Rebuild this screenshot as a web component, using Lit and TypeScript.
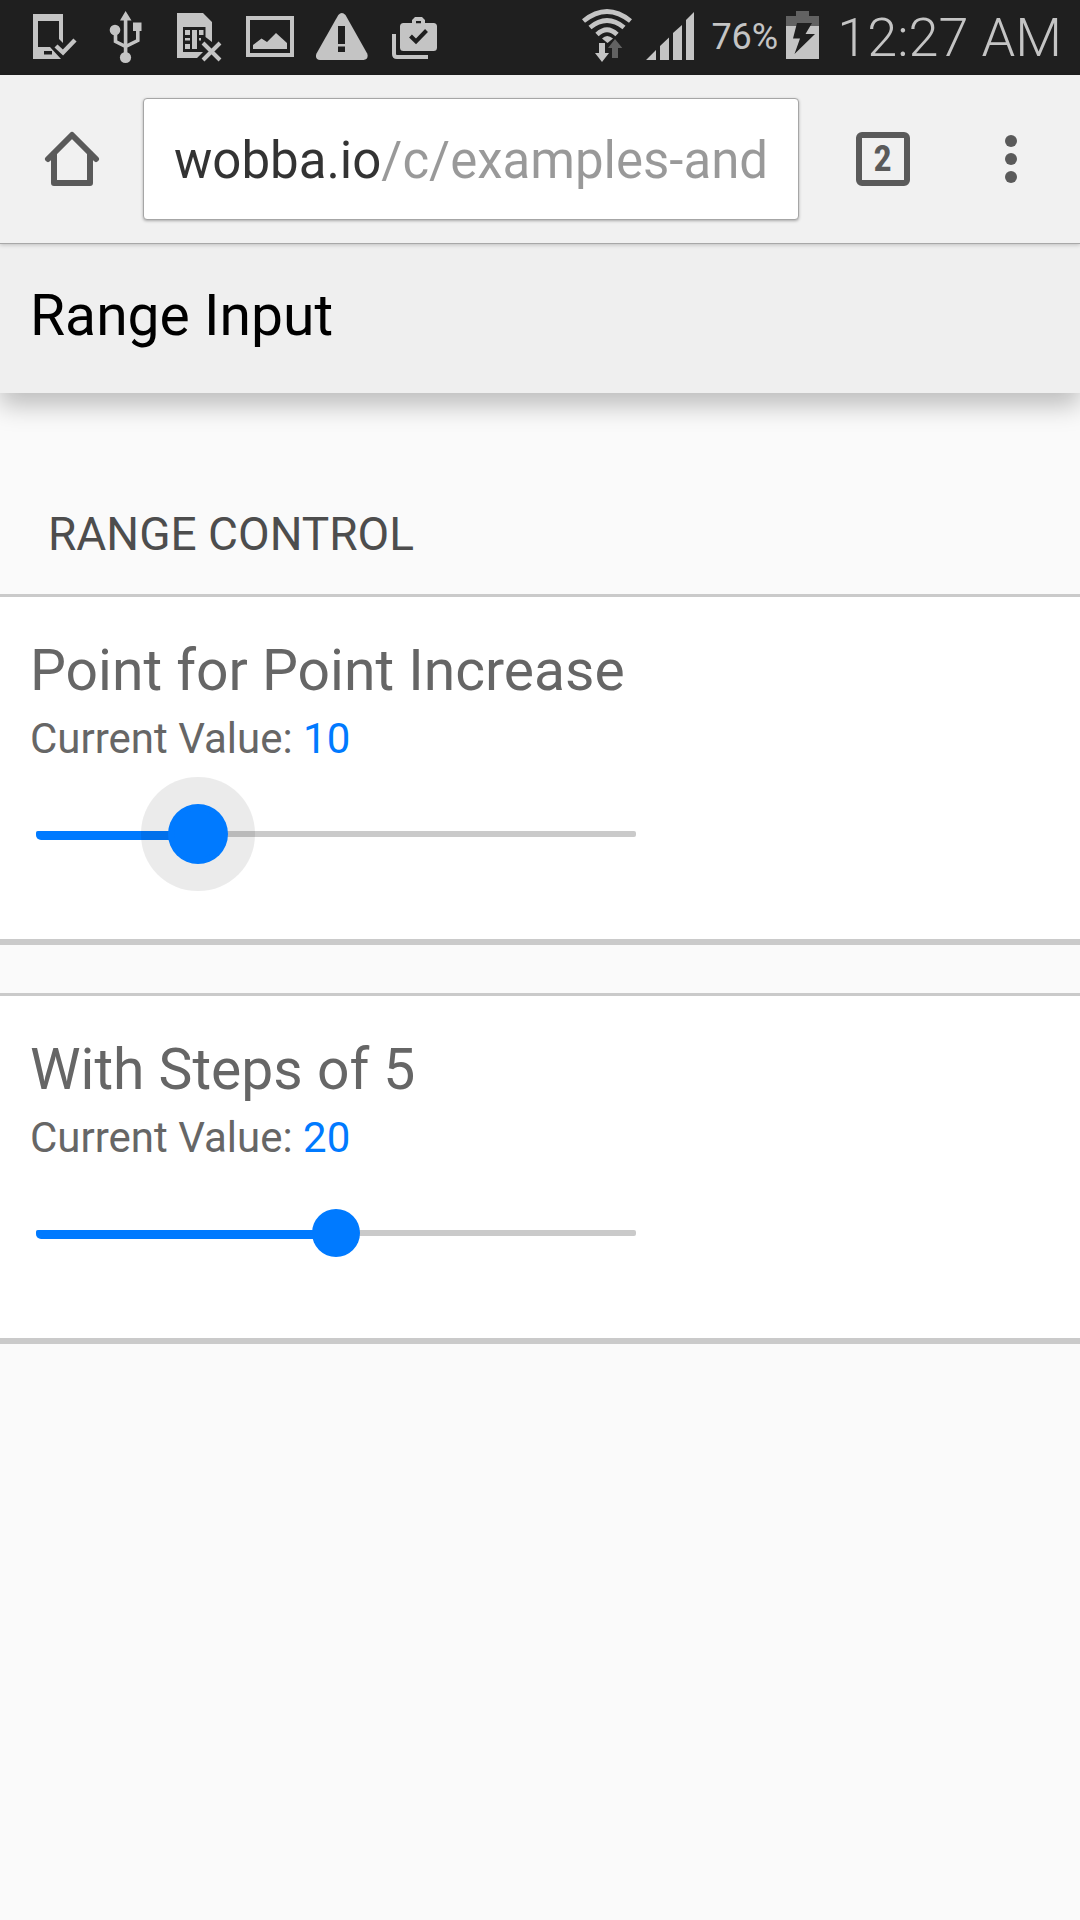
import { LitElement, html, css, svg } from "lit";
import { customElement, property, state } from "lit/decorators.js";

@customElement("status-bar")
class StatusBar extends LitElement {
  static styles = css`
    :host {
      display: flex;
      align-items: center;
      justify-content: space-between;
      height: 75px;
      box-sizing: border-box;
      padding: 0 18px 0 32px;
      background: #1f1f1f;
      color: #c4c4c4;
      font-family: Roboto, sans-serif;
      font-weight: 300;
    }
    .group {
      display: flex;
      align-items: center;
    }
    .notes {
      gap: 22px;
    }
    svg {
      display: block;
      flex: none;
      fill: currentColor;
    }
    .line {
      fill: none;
      stroke: currentColor;
    }
    .cut {
      fill: #1f1f1f;
    }
    .cutline {
      fill: none;
      stroke: #1f1f1f;
    }
    .dim {
      fill: #626262;
    }
    .percent {
      margin-left: 16px;
      font-size: 36px;
      line-height: 75px;
      font-weight: 400;
    }
    .battery {
      margin-left: 8px;
    }
    .clock {
      margin-left: 17px;
      font-size: 54px;
      line-height: 72px;
      white-space: nowrap;
    }
    .signal {
      margin-left: 14px;
    }
  `;

  render() {
    return html`
      <div class="group notes">
        <svg width="51" height="75" viewBox="32 0 51 75" role="img" aria-label="Device updated">
          <path fill-rule="evenodd" d="M33 14H63V43L59 39V21H38V47H50L61 59H33ZM44 51V54.5H52V51Z" />
          <path class="line" stroke-width="4.4" d="M56 46L63 52.500L75 40" />
        </svg>
        <svg width="44" height="75" viewBox="105 0 44 75" role="img" aria-label="USB connected">
          <path d="M125.600 11L131.500 20.500H120ZM133 22.500H141.500V31H133Z" />
          <circle cx="115" cy="30" r="5.300" />
          <circle cx="125.500" cy="57.500" r="5.600" />
          <path class="line" stroke-width="3.600" d="M125.600 18V57M115.500 30V41.500L125.600 46.500L137.800 40.500V28" />
        </svg>
        <svg width="53" height="75" viewBox="171 0 53 75" role="img" aria-label="No SIM card">
          <path fill-rule="evenodd" d="M177 13H203L212 22V42L205.500 37V27H183V52H203L197 58H177Z" />
          <path d="M185 30H190V35H185ZM192 30H197V49H192ZM199 30H203.500V35H199ZM185 38H190V40.500H185ZM185 44H190V49H185ZM199 38H201V40.500H199Z" />
          <path class="line" stroke-width="4" d="M203 43L220 60M220 43L203 60" />
        </svg>
        <svg width="48" height="75" viewBox="246 0 48 75" role="img" aria-label="Picture">
          <path fill-rule="evenodd" d="M246 16H294V57H246ZM250 20V53H290V20Z" />
          <path d="M253 49V45L261.500 38.500L267 42L276 33L287 43V49Z" />
        </svg>
        <svg width="52" height="75" viewBox="316 0 52 75" role="img" aria-label="Warning">
          <path d="M338.300 15Q341.800 11 345.500 15L367.200 53.500Q369 59 363.500 60H320Q314.500 59 316.500 53.500Z" />
          <path class="cut" d="M338 26H345V44H338ZM338 46.500H345V52H338Z" />
        </svg>
        <svg width="49" height="75" viewBox="390 0 49 75" role="img" aria-label="Apps updated">
          <path fill-rule="evenodd" d="M403.500 23H412V20L415 17H422L425 20V23H433.500Q437 23 437 26.500V47.500Q437 51 433.500 51H403.500Q400 51 400 47.500V26.500Q400 23 403.500 23ZM416 21V23.300H421V21Z" />
          <path class="line" stroke-width="4" d="M394 34V54Q394 57 397 57H428" />
          <path class="cutline" stroke-width="4" d="M410.500 36L416 41.500L426.500 30.500" />
        </svg>
      </div>
      <div class="group">
        <svg width="50" height="75" viewBox="581 0 50 75" role="img" aria-label="Wi-Fi">
          <path class="line" stroke-width="4.800" d="M582.500 21Q606 2 629.500 21M589 27.500Q606 13.500 623 27.500M596 34.500Q606 25 616 34.500" />
          <path d="M601 38.500Q606 33.500 612 38.500L606.500 43Z" />
          <path d="M598 43H604V53H608L601 62L594 53H598Z" />
          <path class="dim" d="M614 39L621.300 48H617V58H611V48H607Z" />
        </svg>
        <svg class="signal" width="49" height="75" viewBox="645 0 49 75" role="img" aria-label="Signal">
          <path d="M645 60L655 50V60ZM659 60V46L668 37.500V60ZM672 60V33L681 25V60ZM685 60V20L693 12V60Z" />
        </svg>
        <span class="percent">76%</span>
        <svg class="battery" width="34" height="75" viewBox="786 0 34 75" role="img" aria-label="Charging">
          <path class="dim" d="M796 11H809V16H819V26H786V16H796Z" />
          <path d="M786 26H819V59H786Z" />
          <path class="cut" d="M797 23H812L805.500 34H815L794.500 54L800 38.500H793Z" />
        </svg>
        <time class="clock">12:27 AM</time>
      </div>
    `;
  }
}

@customElement("browser-bar")
class BrowserBar extends LitElement {
  @property() url = "";

  static styles = css`
    :host {
      display: flex;
      align-items: center;
      box-sizing: border-box;
      height: 169px;
      padding-right: 24px;
      background: #f1f1f1;
      border-bottom: 1px solid #a8a8a8;
      box-shadow: 0 1px 4px rgba(0, 0, 0, 0.2);
      color: #5a5a5a;
      position: relative;
      z-index: 2;
      font-family: Roboto, sans-serif;
    }
    button {
      display: flex;
      align-items: center;
      justify-content: center;
      flex: none;
      height: 120px;
      padding: 0;
      border: 0;
      background: none;
      color: inherit;
      font: inherit;
    }
    svg {
      display: block;
    }
    .home {
      width: 143px;
    }
    .tabs {
      width: 167px;
    }
    .menu {
      width: 90px;
    }
    .count {
      display: block;
      box-sizing: border-box;
      width: 54px;
      height: 54px;
      border: 6px solid currentColor;
      border-radius: 6px;
      font-family: "Roboto Condensed", Roboto, sans-serif;
      font-size: 36px;
      font-weight: 700;
      line-height: 43px;
      text-align: center;
    }
    .field {
      flex: 1;
      min-width: 0;
      display: flex;
      box-sizing: border-box;
      height: 122px;
      padding: 4px 29px 0 30px;
      background: #fff;
      border: 1px solid #a6a6a6;
      border-radius: 4px;
      box-shadow: 0 1px 3px rgba(0, 0, 0, 0.3);
    }
    .address {
      flex: 1;
      min-width: 0;
      padding: 0;
      border: 0;
      outline: 0;
      font: 400 51px/64px Roboto, sans-serif;
      color: #333;
      background: linear-gradient(90deg, #333 208px, #999 208px);
      -webkit-background-clip: text;
      background-clip: text;
      -webkit-text-fill-color: transparent;
    }
  `;

  render() {
    return html`
      <button class="home" aria-label="Home">
        <svg width="56" height="56" viewBox="44 131 56 56" fill="none" stroke="currentColor" stroke-width="6" stroke-linecap="round" stroke-linejoin="round" aria-hidden="true">
          <path d="M48 159L72 135L96 159" />
          <path d="M54 154V183H90V154" />
        </svg>
      </button>
      <label class="field">
        <input class="address" type="text" aria-label="Address" .value=${this.url} />
      </label>
      <button class="tabs" aria-label="Open tabs"><span class="count">2</span></button>
      <button class="menu" aria-label="Menu">
        <svg width="12" height="48" viewBox="0 0 12 48" fill="currentColor" aria-hidden="true">
          ${[6, 24, 42].map((y) => svg`<circle cx="6" cy=${y} r="6" />`)}
        </svg>
      </button>
    `;
  }
}

@customElement("range-card")
class RangeCard extends LitElement {
  @property() heading = "";
  @property({ type: Number }) step = 1;
  @property({ type: Number }) max = 40;
  @property({ type: Number }) value = 0;
  @property({ type: Boolean, reflect: true }) pressed = false;

  static styles = css`
    :host {
      display: block;
      padding: 41px 30px 75px;
      background: #fff;
      border-top: 3px solid #cacaca;
      border-bottom: 6px solid #cacaca;
      color: #666;
      font-family: Roboto, sans-serif;
    }
    .title {
      display: block;
      font-size: 57px;
      line-height: 66px;
    }
    .current {
      margin: 10px 0 40px;
      font-size: 42px;
      line-height: 50px;
    }
    .value {
      color: #007aff;
    }
    .slider {
      display: grid;
      align-items: center;
      width: 600px;
      max-width: 100%;
      height: 60px;
      margin-left: 6px;
    }
    .slider > * {
      grid-area: 1 / 1;
    }
    .track {
      height: 6px;
      border-radius: 2px;
      background: #cacaca;
    }
    .fill {
      height: 9px;
      margin-top: 3px;
      border-radius: 2px 0 0 5px;
      background: #007aff;
    }
    .input {
      appearance: none;
      width: 100%;
      height: 60px;
      margin: 0;
      background: transparent;
      outline: 0;
    }
    .input::-webkit-slider-thumb {
      appearance: none;
      width: 48px;
      height: 48px;
      border: 0;
      border-radius: 50%;
      background: #007aff;
    }
    :host([pressed]) .input::-webkit-slider-thumb {
      box-shadow: 0 0 0 6px #007aff, 0 0 0 33px rgba(0, 0, 0, 0.08);
    }
  `;

  private onInput(e: Event) {
    this.value = Number((e.target as HTMLInputElement).value);
  }

  render() {
    const ratio = this.value / this.max;
    return html`
      <label class="title" for="range">${this.heading}</label>
      <div class="current">Current Value: <output class="value" for="range">${this.value}</output></div>
      <div class="slider">
        <div class="track"></div>
        <div class="fill" style="width: calc(24px + (100% - 48px) * ${ratio})"></div>
        <input
          class="input"
          id="range"
          type="range"
          min="0"
          max=${this.max}
          step=${this.step}
          .value=${String(this.value)}
          @input=${this.onInput}
          @pointerdown=${() => (this.pressed = true)}
          @pointerup=${() => (this.pressed = false)}
        />
      </div>
    `;
  }
}

@customElement("app-root")
class AppRoot extends LitElement {
  @state() private cards = [
    { heading: "Point for Point Increase", step: 1, value: 10, pressed: true },
    { heading: "With Steps of 5", step: 5, value: 20, pressed: false },
  ];

  static styles = css`
    :host {
      display: flex;
      flex-direction: column;
      min-height: 100vh;
      background: #fafafa;
      font-family: Roboto, sans-serif;
    }
    .header {
      padding: 39px 30px 44px;
      background: #efefef;
      box-shadow: 0 12px 24px rgba(0, 0, 0, 0.25);
    }
    .name {
      margin: 0;
      font-size: 57px;
      font-weight: 400;
      line-height: 66px;
      color: #000;
    }
    .section {
      margin: 0;
      padding: 114px 48px 33px;
      font-size: 46px;
      font-weight: 400;
      line-height: 54px;
      color: #4d4d4d;
      text-transform: uppercase;
    }
    .cards {
      display: flex;
      flex-direction: column;
      gap: 48px;
    }
  `;

  render() {
    return html`
      <status-bar></status-bar>
      <browser-bar url="wobba.io/c/examples-and"></browser-bar>
      <header class="header"><h1 class="name">Range Input</h1></header>
      <main>
        <h2 class="section">Range Control</h2>
        <div class="cards">
          ${this.cards.map(
            (c) => html`<range-card
              .heading=${c.heading}
              .step=${c.step}
              .value=${c.value}
              .pressed=${c.pressed}
            ></range-card>`
          )}
        </div>
      </main>
    `;
  }
}
